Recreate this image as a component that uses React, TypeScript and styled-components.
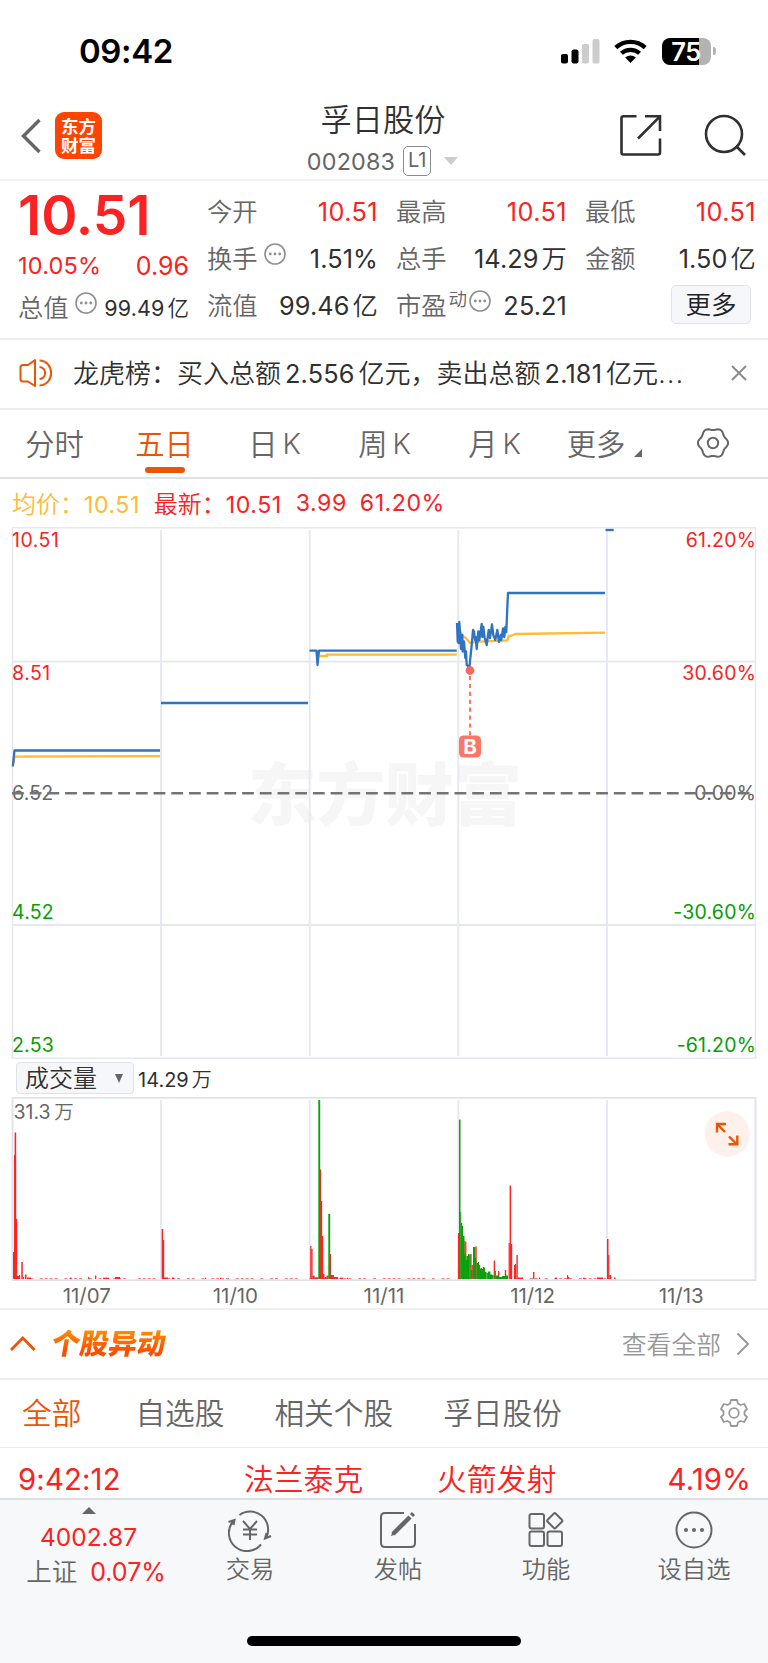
import React from "react";
import styled, { createGlobalStyle } from "styled-components";

const RED = "#fa2222";
const GREEN = "#04a004";
const ORANGE = "#ea5504";
const INK = "#303030";
const GREY = "#666";
const LINE = "#ececee";

const Global = createGlobalStyle`
  * { box-sizing: border-box; }
  body {
    margin: 0;
    background: #fff;
    font-family: Inter, "Noto Sans CJK SC", sans-serif;
    color: ${INK};
  }
`;

const Page = styled.div`
  width: 768px;
  height: 1663px;
  display: flex;
  flex-direction: column;
  background: #fff;
  overflow: hidden;
  white-space: nowrap;
  svg { display: block; flex: none; }
`;

const StatusBar = styled.div`
  height: 96px;
  padding: 6px 52px 0 79px;
  display: flex;
  align-items: center;
  justify-content: space-between;
`;
const Clock = styled.div`
  font-size: 33px;
  font-weight: 600;
  letter-spacing: -0.4px;
  color: #000;
`;
const StatusIcons = styled.div`
  display: flex;
  align-items: center;
`;
const Battery = styled.div`
  width: 49px;
  height: 27px;
  margin-left: 15px;
  border-radius: 8px;
  background: linear-gradient(90deg, #000 37px, #b3b3b3 37px);
  color: #fff;
  font-size: 25.5px;
  font-weight: 600;
  line-height: 27px;
  text-align: center;
  letter-spacing: -0.6px;
  padding-right: 1px;
`;
const BatteryTip = styled.div`
  width: 3px;
  height: 8px;
  margin-left: 2px;
  border-radius: 0 4px 4px 0;
  background: #b3b3b3;
`;

const Header = styled.header`
  height: 85px;
  border-bottom: 2px solid #f2f2f2;
  display: grid;
  grid-template-columns: 1fr 200px 1fr;
`;
const HeaderLeft = styled.div`
  display: flex;
  align-items: flex-start;
  padding: 16px 0 0 21px;
`;
const BrandLogo = styled.div`
  width: 47px;
  height: 47px;
  margin-left: 14px;
  border-radius: 9px;
  background: #ff4400;
  color: #fff;
  display: flex;
  flex-direction: column;
  align-items: center;
  justify-content: center;
  gap: 1.5px;
`;
const BrandLine = styled.span`
  font-family: "Noto Sans CJK SC", sans-serif;
  font-weight: 700;
  font-size: 17.5px;
  line-height: 18px;
`;
const HeaderTitle = styled.div`
  display: flex;
  flex-direction: column;
  align-items: center;
`;
const StockName = styled.div`
  margin-top: 6px;
  margin-right: 2px;
  height: 36px;
  line-height: 36px;
  font-size: 31.2px;
  font-weight: 350;
`;
const StockCode = styled.div`
  height: 30px;
  margin-top: 8px;
  margin-right: 3px;
  display: flex;
  align-items: center;
  font-size: 23.3px;
  color: ${GREY};
`;
const Digits = styled.span`
  letter-spacing: 0.2px;
`;
const LevelBadge = styled.span`
  width: 28px;
  height: 30px;
  margin: 0 13px 0 8px;
  border: 1.5px solid #8c8c8c;
  border-radius: 5px;
  font-size: 20px;
  line-height: 27px;
  text-align: center;
`;
const HeaderRight = styled.div`
  display: flex;
  justify-content: flex-end;
  padding: 18px 22px 0 0;
  gap: 42px;
`;

const Quote = styled.section`
  height: 159px;
  border-bottom: 2px solid ${LINE};
  padding: 0 13px 0 18px;
  display: grid;
  grid-template-columns: repeat(4, 1fr);
  column-gap: 19px;
`;
const PriceColumn = styled.div`
  display: flex;
  flex-direction: column;
`;
const LastPrice = styled.div`
  height: 68px;
  line-height: 69px;
  font-size: 55px;
  font-weight: 600;
  letter-spacing: -0.1px;
  color: ${RED};
`;
const ChangeRow = styled.div`
  height: 33px;
  display: flex;
  align-items: center;
  justify-content: space-between;
  color: ${RED};
  font-size: 23.5px;
  letter-spacing: 0.2px;
`;
const ChangeAmount = styled.span`
  font-size: 25px;
  letter-spacing: 0;
  padding-top: 1px;
  margin-right: -1px;
`;
const StatColumn = styled.div`
  padding-top: 7px;
`;
const Stat = styled.div<{ $tight?: boolean }>`
  height: 47.4px;
  display: flex;
  align-items: center;
  line-height: 40px;
  margin-top: ${(p) => (p.$tight ? "2.5px" : "0")};
`;
const StatLabel = styled.span`
  font-size: 25.3px;
  font-weight: 350;
  color: ${GREY};
`;
const StatHint = styled.span`
  margin: -10px 0 0 6px;
`;
const StatSup = styled.sup`
  font-size: 18.5px;
  font-weight: 350;
  line-height: 20px;
  color: ${GREY};
  margin: -15px -4px 0 2px;
`;
const StatValue = styled.span<{ $up?: boolean; $small?: boolean }>`
  margin-left: auto;
  margin-right: -1px;
  font-size: ${(p) => (p.$small ? "21.5px" : "25.3px")};
  letter-spacing: ${(p) => (p.$up ? "0.4px" : "0.1px")};
  color: ${(p) => (p.$up ? RED : INK)};
`;
const Unit = styled.span`
  margin-left: 3px;
  font-weight: 350;
`;
const MoreButton = styled.button`
  width: 80px;
  height: 39px;
  margin: -3px 4px 0 auto;
  padding: 0;
  border: 1.5px solid #dfe2e9;
  border-radius: 5px;
  background: #f6f7fa;
  font: 350 25.5px/34px Inter, "Noto Sans CJK SC", sans-serif;
  color: #222;
`;

const Notice = styled.section`
  height: 70px;
  border-bottom: 2px solid ${LINE};
  padding: 0 21px 2px 19px;
  display: flex;
  align-items: center;
`;
const NoticeText = styled.div`
  flex: 1;
  margin: -3px 0 0 20px;
  font-size: 26px;
  font-weight: 350;
`;
const Num = styled.span`
  margin: 0 4px;
  font-size: 25.3px;
  letter-spacing: 0.15px;
  font-weight: 400;
`;
const Dots = styled.span`
  letter-spacing: 1.5px;
`;

const PeriodTabs = styled.nav`
  height: 69px;
  border-bottom: 2px solid #dfe1e6;
  display: grid;
  grid-template-columns: repeat(6, 110px) 107px;
`;
const PeriodTab = styled.div<{ $active?: boolean }>`
  display: flex;
  align-items: center;
  justify-content: center;
  position: relative;
  padding-bottom: 3px;
  padding-right: 1px;
  font-size: 29.3px;
  font-weight: 350;
  color: ${(p) => (p.$active ? ORANGE : GREY)};
  &::after {
    content: "";
    display: ${(p) => (p.$active ? "block" : "none")};
    position: absolute;
    left: 35px;
    bottom: 4px;
    width: 40px;
    height: 6px;
    border-radius: 3px;
    background: ${ORANGE};
  }
`;
const Latin = styled.span`
  margin-left: 5px;
  margin-top: 3px;
  font-size: 28.5px;
`;
const CornerMark = styled.span`
  margin: 21px 0 0 9px;
  border-left: 8px solid transparent;
  border-bottom: 8px solid ${GREY};
`;

const Legend = styled.div`
  height: 48px;
  padding: 0 12px 2px;
  display: flex;
  align-items: center;
  font-size: 24px;
  font-weight: 350;
  color: ${RED};
`;
const LegendItem = styled.span<{ $color: string; $gap: number }>`
  color: ${(p) => p.$color};
  margin-right: ${(p) => p.$gap}px;
`;
const LegendNum = styled.span`
  font-size: 23.2px;
  letter-spacing: 0.5px;
  font-weight: 400;
`;

const VolumeHeader = styled.div`
  height: 38px;
  padding-left: 16px;
  display: flex;
  align-items: center;
`;
const IndicatorSelect = styled.div`
  width: 118px;
  height: 32px;
  padding: 0 10px 0 8px;
  display: flex;
  align-items: center;
  justify-content: space-between;
  border: 1.5px solid #dfe2e9;
  border-radius: 4px;
  background: #f6f7fa;
  font-size: 24px;
  font-weight: 350;
  line-height: 29px;
`;
const DownMark = styled.span`
  border: 4.5px solid transparent;
  border-top: 9px solid ${GREY};
  border-bottom: 0;
`;
const IndicatorValue = styled.div`
  margin-left: 4px;
  font-size: 20px;
`;

const Dates = styled.div`
  height: 29px;
  border-bottom: 2px solid #f0f0f2;
  padding: 1px 12.5px 0;
  display: grid;
  grid-template-columns: repeat(5, 1fr);
  text-align: center;
  font-size: 20.5px;
  line-height: 27px;
  color: ${GREY};
`;

const MoversHeader = styled.section`
  height: 70px;
  border-bottom: 2px solid ${LINE};
  padding: 0 18px 0 10px;
  display: flex;
  align-items: center;
`;
const MoversTitle = styled.h2`
  margin: -4px auto 0 16px;
  font-size: 28.5px;
  font-weight: 900;
  line-height: 36px;
  font-family: "Noto Sans CJK SC", sans-serif;
  transform: skewX(-10deg);
  background: linear-gradient(#ff8a00 20%, #ff4d00 75%);
  background-clip: text;
  color: transparent;
`;
const ViewAll = styled.span`
  margin: -2px 15px 0 0;
  font-size: 24.8px;
  font-weight: 350;
  color: #999;
`;

const MoversTabs = styled.nav`
  height: 68px;
  border-bottom: 1px solid ${LINE};
  padding: 0 20px 5px 22px;
  display: flex;
  align-items: center;
  gap: 50px;
`;
const MoversTab = styled.span<{ $active?: boolean }>`
  font-size: 29.7px;
  font-weight: 350;
  margin-right: ${(p) => (p.$active ? "4px" : "0")};
  color: ${(p) => (p.$active ? ORANGE : GREY)};
`;
const TabTool = styled.span`
  margin: 3px 0 0 auto;
`;

const MoverRow = styled.div`
  height: 50px;
  padding: 12px 17px 0 18px;
  display: grid;
  grid-template-columns: 226px 193px 1fr auto;
  line-height: 39px;
  font-size: 29.8px;
  font-weight: 350;
  color: ${RED};
`;
const MoverNum = styled.span`
  font-size: 29.3px;
  letter-spacing: 0.15px;
  font-weight: 400;
`;

const BottomBar = styled.footer`
  flex: 1;
  border-top: 2px solid #dcdee2;
  background: #f7f8fa;
  display: flex;
  flex-direction: column;
  align-items: center;
`;
const BottomItems = styled.div`
  width: 100%;
  height: 138px;
  display: grid;
  grid-template-columns: 176px repeat(4, 148px);
`;
const IndexTicker = styled.div`
  display: flex;
  flex-direction: column;
  align-items: center;
  padding: 7px 0 0 1px;
`;
const UpMark = styled.span`
  border: 7px solid transparent;
  border-bottom: 7px solid ${GREY};
  border-top: 0;
`;
const IndexValue = styled.div`
  margin-top: 6px;
  height: 34px;
  line-height: 34px;
  font-size: 24.5px;
  color: ${RED};
`;
const IndexChange = styled.div`
  height: 36px;
  padding-left: 15px;
  line-height: 36px;
  font-size: 25.5px;
  font-weight: 350;
  color: ${GREY};
`;
const IndexPct = styled.span`
  margin-left: 13px;
  font-size: 25px;
  font-weight: 400;
  color: ${RED};
`;
const Action = styled.div`
  display: flex;
  flex-direction: column;
  align-items: center;
  padding-top: 8px;
  font-size: 24.3px;
  font-weight: 350;
  line-height: 34px;
  color: ${GREY};
`;
const ActionLabel = styled.span``;
const HomeIndicator = styled.div`
  width: 274px;
  height: 10px;
  margin-top: -2px;
  border-radius: 5px;
  background: #000;
`;

const HintIcon = () => (
  <svg width="22" height="22" viewBox="0 0 22 22" fill="none">
    <circle cx="11" cy="11" r="10" stroke="#909090" strokeWidth="1.6" />
    <g fill="#909090">
      <circle cx="6.3" cy="11" r="1.4" />
      <circle cx="11" cy="11" r="1.4" />
      <circle cx="15.7" cy="11" r="1.4" />
    </g>
  </svg>
);

/* Six-lobed wavy outline around (17, 16). */
const WAVY_GEAR =
  "M" +
  Array.from({ length: 72 }, (_, i) => {
    const a = (i * Math.PI) / 36;
    const r = 14 + 1.1 * Math.cos(6 * a);
    return `${(17 + r * Math.cos(a)).toFixed(2)} ${(16 + r * Math.sin(a)).toFixed(2)}`;
  }).join("L") +
  "Z";

const VERTICALS = [161, 309.7, 458.3, 607];

const DAY4_PRICE =
  "457,623 457.7,641.5 458.7,643 459.3,622 461,649 462.3,635 462.7,651.5 464,641.5 465.3,658 466,651.5 466.7,665 468,666 469,672 470,661.5 471.7,645 473,630 474,631.5 475,640 475.7,637 476.7,649 478.3,631.5 479.3,640 481.7,624 482.3,637 483.3,627 484.7,638 486.7,645 488.7,630 490,638 492,624.5 493.3,635 495.3,640 497.3,630 499,642 500.7,635 501.3,640 503,628.5 504.3,637 505.3,627 506.3,632 507.3,608 508,593 605,593";

const PriceChart = () => (
  <svg width="768" height="532" viewBox="0 527 768 532" fill="none">
    <g
      fill="#f6f6f6"
      fontFamily="Noto Sans CJK SC, sans-serif"
      fontWeight="900"
      fontSize="68.5"
    >
      <text x="248" y="819.5">东方财富</text>
    </g>
    <g stroke="#e4e7ee" strokeWidth="1.5">
      <rect x="12.5" y="527.8" width="743" height="530.5" />
      {VERTICALS.map((x) => (
        <path key={x} d={`M${x} 530V1056`} strokeWidth="1.8" />
      ))}
      <path d="M12 661.7H755M12 925H755" strokeWidth="1.8" />
    </g>
    <g stroke="#fdbb36" strokeWidth="2.3">
      <path d="M13 765L14.5 756.7L160 756.2" />
      <path d="M319.6 656H327V654.7H456.7" />
      <path d="M457 623L461.7 635L466 638.3L470 642.7L480 641.7L507.3 640.3L508.7 636L511.7 635.7L515.7 634L605 632.7" />
    </g>
    <g stroke="#2f74c0" strokeWidth="2.3" strokeLinejoin="round">
      <path d="M12.8 766.5L14.5 750.5H160" />
      <path d="M161 703H308" />
      <path d="M309.5 650.7H316.5L317.5 665L319 650.7H456.7" />
      <polyline points={DAY4_PRICE} />
      <path d="M605.5 530H613.7" />
    </g>
    <circle cx="470" cy="670.5" r="4.4" fill="#f8685c" />
    <path d="M470 676V736" stroke="#fd7567" strokeWidth="2" strokeDasharray="4.2 3.7" />
    <rect x="459" y="735.5" width="22" height="22" rx="4.5" fill="#fd7567" />
    <text x="470" y="754" fill="#fff" fontSize="20.5" fontWeight="700" textAnchor="middle">B</text>
    <g fontSize="19.5" letterSpacing="0.2">
      <text x="12" y="547" fill={RED} letterSpacing="0.5">10.51</text>
      <text x="12" y="679.5" fill={RED} letterSpacing="0.5">8.51</text>
      <text x="12" y="800" fill={GREY}>6.52</text>
      <text x="12" y="919" fill={GREEN}>4.52</text>
      <text x="12" y="1051.5" fill={GREEN}>2.53</text>
    </g>
    <g fontSize="19.5" textAnchor="end" letterSpacing="0.2">
      <text x="756" y="547" fill={RED}>61.20%</text>
      <text x="756" y="679.5" fill={RED}>30.60%</text>
      <text x="756" y="800" fill={GREY}>0.00%</text>
      <text x="756" y="919" fill={GREEN}>-30.60%</text>
      <text x="756" y="1051.5" fill={GREEN}>-61.20%</text>
    </g>
    <path d="M12 793.2H755" stroke="#747474" strokeWidth="2.6" strokeDasharray="11.8 5.9" />
  </svg>
);

type Bar = [x: number, top: number, width?: number];

const RED_BARS: Bar[] = [
  [13, 1252, 1.2], [14, 1155, 1.2], [14.6, 1132.5, 1.6], [15.8, 1219, 1.4], [17, 1276, 2], [19, 1275], [21.3, 1262, 1.5],
  [23, 1277], [25, 1274.5, 1.5], [27, 1277.5, 4], [70, 1277.5], [88, 1277], [95, 1275.5, 1.3], [103, 1277.7, 6], [115, 1277, 5],
  [161.7, 1229, 1.4], [163, 1240, 1.2], [164, 1277.5, 4], [172, 1277.5, 2], [205, 1277.8], [220, 1277.8],
  [310.2, 1246, 1.3], [311.3, 1249, 1.3], [312.6, 1275.5, 2], [314.5, 1277.3, 4], [320, 1169.5, 1.2], [321, 1201, 1.2],
  [322, 1236, 1.2], [323, 1274, 1.5], [324.5, 1277, 2], [326.5, 1275.5, 2], [329.8, 1254, 1.3], [331, 1275, 3],
  [334, 1277, 4], [340, 1277.7, 3], [347, 1277.8],
  [458, 1233, 1.4], [461, 1223, 1.2], [464.3, 1241], [465.2, 1242, 1.2], [470.3, 1254, 1.3], [471.6, 1265, 1.3],
  [475.3, 1246.5, 1.4], [479, 1265], [483, 1267], [493.7, 1260.5, 1.4], [498, 1271, 1.3], [504.8, 1270, 1.4],
  [508.6, 1243, 1.2], [509.6, 1185.5, 1.5], [511, 1244, 1.2], [514, 1265], [515, 1264, 1.2], [516.4, 1255, 1.4],
  [518, 1277.5, 5], [533, 1272, 1.4], [539, 1277.5], [555, 1277.5, 2], [567, 1275], [568, 1277, 1.2], [583, 1277.8, 2],
  [597, 1277.5, 6], [607, 1239, 1.5], [608.2, 1255, 1.2], [609.3, 1275, 2], [614, 1277.5, 1.5],
];

const GREEN_BARS: Bar[] = [
  [318.3, 1100, 1.9], [328.3, 1214, 1.9],
  [459, 1119.5, 1.5], [460.2, 1212, 1], [461.5, 1226, 1.6], [463, 1236, 1.5], [464, 1254, 1.5], [465.5, 1260, 1.5],
  [466.5, 1256, 1.7], [468, 1254, 1.6], [469.3, 1255, 1.4], [471, 1270, 1.4], [473, 1247, 2.2], [475, 1258, 1.2],
  [476.5, 1263, 1.5], [477.8, 1262, 1.2], [479.5, 1269, 1.5], [480.6, 1268, 1.4], [482, 1269, 1.5], [483.4, 1267.5, 1.7],
  [485, 1272, 1.5], [486.5, 1273, 1.4], [488, 1271.5, 2.4], [490, 1274.5, 2.2], [492, 1275, 1.5], [494.5, 1271, 1.4],
  [496, 1275.5, 3], [499, 1277, 3], [502, 1276, 3], [505, 1275.5, 3],
];

const SPARKS = Array.from({ length: 118 }, (_, i) => 30 + i * 4.9).filter(
  (x, i) => (i * 7) % 5 !== 2 && (i * 11) % 7 !== 3 && (x < 455 || x > 512)
);

const VolumeChart = () => (
  <svg width="768" height="184" viewBox="0 1097 768 184" fill="none">
    <g stroke="#e4e7ee" strokeWidth="1.8">
      <rect x="12.5" y="1097.8" width="743" height="182.4" stroke="#dfe2e8" />
      {VERTICALS.map((x) => (
        <path key={x} d={`M${x} 1100V1279`} />
      ))}
    </g>
    <g fill="#ff2424">
      {SPARKS.map((x) => (
        <rect key={x} x={x} y="1278.4" width="3" height="0.6" />
      ))}
      {RED_BARS.map(([x, top, w = 1.2]) => (
        <rect key={`${x}-${top}`} x={x} y={top} width={w} height={1279 - top} />
      ))}
    </g>
    <g fill="#0ca00c">
      {GREEN_BARS.map(([x, top, w = 1.2]) => (
        <rect key={`${x}-${top}`} x={x} y={top} width={w} height={1279 - top} />
      ))}
    </g>
    <text x="13.5" y="1119" fontSize="19.5" fill={GREY}>
      31.3<tspan dx="3.5" fontWeight="350">万</tspan>
    </text>
    <circle cx="727.3" cy="1134" r="22.7" fill="#fef1eb" />
    <path
      d="M717 1132.5V1124H726M717.5 1124.5L725 1132M729 1136.5L736.5 1144M728.5 1144.3H737.3V1135.5"
      stroke={ORANGE}
      strokeWidth="2.4"
    />
  </svg>
);

const App = () => (
  <Page>
    <Global />
    <StatusBar>
      <Clock>09:42</Clock>
      <StatusIcons>
        <svg width="39" height="25" viewBox="0 0 39 25">
          <rect x="0" y="15" width="7" height="9.5" rx="2" />
          <rect x="10.5" y="10.5" width="7" height="14" rx="2" />
          <rect x="21" y="5" width="7" height="19.5" rx="2" fill="#ccc" />
          <rect x="31.5" y="0" width="7" height="24.5" rx="2" fill="#ccc" />
        </svg>
        <svg width="47" height="25" viewBox="-14 0 47 25" fill="none">
          <path d="M1.8 8.6C10 0.9 23 0.9 31.2 8.6" stroke="#000" strokeWidth="4.4" />
          <path d="M7.4 14.3C12.6 9.6 20.4 9.6 25.6 14.3" stroke="#000" strokeWidth="4.2" />
          <path d="M11.2 18.4C14.2 15.7 18.8 15.7 21.8 18.4L16.5 24Z" fill="#000" />
        </svg>
        <Battery>75</Battery>
        <BatteryTip />
      </StatusIcons>
    </StatusBar>

    <Header>
      <HeaderLeft>
        <svg width="20" height="47" viewBox="0 0 20 47" fill="none">
          <path d="M18.5 8L2.5 24L18.5 40" stroke={GREY} strokeWidth="3.4" />
        </svg>
        <BrandLogo>
          <BrandLine>东方</BrandLine>
          <BrandLine>财富</BrandLine>
        </BrandLogo>
      </HeaderLeft>
      <HeaderTitle>
        <StockName>孚日股份</StockName>
        <StockCode>
          <Digits>002083</Digits>
          <LevelBadge>L1</LevelBadge>
          <svg width="14" height="8" viewBox="0 0 14 8">
            <path d="M0 0H14L7 8Z" fill="#ccc" />
          </svg>
        </StockCode>
      </HeaderTitle>
      <HeaderRight>
        <svg width="42" height="42" viewBox="0 0 42 42" fill="none" stroke="#303030" strokeWidth="2.6">
          <path d="M16.5 2.3H3.5Q1.5 2.3 1.5 4.3V38.5Q1.5 40.5 3.5 40.5H38Q40 40.5 40 38.5V24.5" />
          <path d="M25 2.3H40V17M39.5 2.8L18 24.5" />
        </svg>
        <svg width="42" height="42" viewBox="0 0 42 42" fill="none" stroke="#303030" strokeWidth="2.6">
          <circle cx="20" cy="20" r="18" />
          <path d="M32 32L41 41" />
        </svg>
      </HeaderRight>
    </Header>

    <Quote>
      <PriceColumn>
        <LastPrice>10.51</LastPrice>
        <ChangeRow>
          <span>10.05%</span>
          <ChangeAmount>0.96</ChangeAmount>
        </ChangeRow>
        <Stat $tight>
          <StatLabel>总值</StatLabel>
          <StatHint><HintIcon /></StatHint>
          <StatValue $small>99.49<Unit>亿</Unit></StatValue>
        </Stat>
      </PriceColumn>
      <StatColumn>
        <Stat>
          <StatLabel>今开</StatLabel>
          <StatValue $up>10.51</StatValue>
        </Stat>
        <Stat>
          <StatLabel>换手</StatLabel>
          <StatHint><HintIcon /></StatHint>
          <StatValue>1.51%</StatValue>
        </Stat>
        <Stat>
          <StatLabel>流值</StatLabel>
          <StatValue>99.46<Unit>亿</Unit></StatValue>
        </Stat>
      </StatColumn>
      <StatColumn>
        <Stat>
          <StatLabel>最高</StatLabel>
          <StatValue $up>10.51</StatValue>
        </Stat>
        <Stat>
          <StatLabel>总手</StatLabel>
          <StatValue>14.29<Unit>万</Unit></StatValue>
        </Stat>
        <Stat>
          <StatLabel>市盈</StatLabel>
          <StatSup>动</StatSup>
          <StatHint><HintIcon /></StatHint>
          <StatValue>25.21</StatValue>
        </Stat>
      </StatColumn>
      <StatColumn>
        <Stat>
          <StatLabel>最低</StatLabel>
          <StatValue $up>10.51</StatValue>
        </Stat>
        <Stat>
          <StatLabel>金额</StatLabel>
          <StatValue>1.50<Unit>亿</Unit></StatValue>
        </Stat>
        <Stat>
          <MoreButton>更多</MoreButton>
        </Stat>
      </StatColumn>
    </Quote>

    <Notice>
      <svg width="34" height="30" viewBox="0 0 34 30" fill="none" stroke={ORANGE} strokeWidth="2">
        <path d="M16 2V28L9 23.5H4Q1.5 23.5 1.5 21V9.5Q1.5 7 4 7H9Z" strokeLinejoin="round" />
        <path d="M20.5 2.5C36 3 36 27 20.5 27.5M20.5 9C28 9.5 28 20.5 20.5 21" />
      </svg>
      <NoticeText>
        龙虎榜：买入总额<Num>2.556</Num>亿元，卖出总额<Num>2.181</Num>亿元<Dots>...</Dots>
      </NoticeText>
      <svg width="16" height="16" viewBox="0 0 16 16" stroke="#8c8c8c" strokeWidth="2">
        <path d="M1 1L15 15M15 1L1 15" />
      </svg>
    </Notice>

    <PeriodTabs>
      <PeriodTab>分时</PeriodTab>
      <PeriodTab $active>五日</PeriodTab>
      <PeriodTab>日<Latin>K</Latin></PeriodTab>
      <PeriodTab>周<Latin>K</Latin></PeriodTab>
      <PeriodTab>月<Latin>K</Latin></PeriodTab>
      <PeriodTab>更多<CornerMark /></PeriodTab>
      <PeriodTab>
        <svg width="34" height="32" viewBox="0 -1 34 32" fill="none" stroke={GREY} strokeWidth="2">
          <circle cx="17" cy="16" r="5.2" />
          <path strokeLinejoin="round" d={WAVY_GEAR} />
        </svg>
      </PeriodTab>
    </PeriodTabs>

    <Legend>
      <LegendItem $color="#fdbb36" $gap={14}>均价：<LegendNum>10.51</LegendNum></LegendItem>
      <LegendItem $color={RED} $gap={14}>最新：<LegendNum>10.51</LegendNum></LegendItem>
      <LegendItem $color={RED} $gap={13}><LegendNum>3.99</LegendNum></LegendItem>
      <LegendItem $color={RED} $gap={0}><LegendNum>61.20%</LegendNum></LegendItem>
    </Legend>
    <PriceChart />

    <VolumeHeader>
      <IndicatorSelect>
        成交量
        <DownMark />
      </IndicatorSelect>
      <IndicatorValue>14.29<Unit>万</Unit></IndicatorValue>
    </VolumeHeader>
    <VolumeChart />
    <Dates>
      {["11/07", "11/10", "11/11", "11/12", "11/13"].map((d) => (
        <span key={d}>{d}</span>
      ))}
    </Dates>

    <MoversHeader>
      <svg width="26" height="16" viewBox="0 0 26 16" fill="none">
        <path d="M1 14L12.8 2L24.6 14" stroke={ORANGE} strokeWidth="2.8" />
      </svg>
      <MoversTitle>个股异动</MoversTitle>
      <ViewAll>查看全部</ViewAll>
      <svg width="14" height="24" viewBox="0 0 14 24" fill="none">
        <path d="M1.5 1.5L12 12L1.5 22.5" stroke="#999" strokeWidth="2" />
      </svg>
    </MoversHeader>
    <MoversTabs>
      <MoversTab $active>全部</MoversTab>
      <MoversTab>自选股</MoversTab>
      <MoversTab>相关个股</MoversTab>
      <MoversTab>孚日股份</MoversTab>
      <TabTool>
        <svg width="28" height="28" viewBox="0 0 28 28" fill="none" stroke="#999" strokeWidth="1.8">
          <circle cx="14" cy="14" r="4.8" />
          <path
            strokeLinejoin="round"
            d="M11 1H17L18 4.5L20.5 6L24.2 5L27 10L24.5 12.5V15.5L27 18L24.2 23L20.5 22L18 23.5L17 27H11L10 23.5L7.5 22L3.8 23L1 18L3.5 15.5V12.5L1 10L3.8 5L7.5 6L10 4.5Z"
          />
        </svg>
      </TabTool>
    </MoversTabs>
    <MoverRow>
      <MoverNum>9:42:12</MoverNum>
      <span>法兰泰克</span>
      <span>火箭发射</span>
      <MoverNum>4.19%</MoverNum>
    </MoverRow>

    <BottomBar>
      <BottomItems>
        <IndexTicker>
          <UpMark />
          <IndexValue>4002.87</IndexValue>
          <IndexChange>上证<IndexPct>0.07%</IndexPct></IndexChange>
        </IndexTicker>
        <Action>
          <svg width="44" height="44" viewBox="0 0 44 44" fill="none" stroke={GREY} strokeWidth="2">
            <path d="M11.5 7A18 18 0 0 1 38.5 29M33 36.5A18 18 0 0 1 5 13.5M0.5 14L6.5 12L5.5 17M43 28L37 30.5L38.5 25" />
            <path d="M15 13L22 21L29 13M22 21V32M15 21.5H29M15 26.5H29" />
          </svg>
          <ActionLabel>交易</ActionLabel>
        </Action>
        <Action>
          <svg width="44" height="44" viewBox="0 0 44 44" fill="none" stroke={GREY} strokeWidth="2">
            <path d="M28 5H9Q5 5 5 9V35Q5 39 9 39H35Q39 39 39 35V16" />
            <path d="M17 26L34 9" strokeWidth="4.5" />
            <path d="M15 28L16.5 23.5L19.5 26.5Z" fill={GREY} stroke="none" />
            <path d="M35.5 7.5L37.5 5.5" strokeWidth="4.5" />
          </svg>
          <ActionLabel>发帖</ActionLabel>
        </Action>
        <Action>
          <svg width="44" height="44" viewBox="0 0 44 44" fill="none" stroke={GREY} strokeWidth="2">
            <rect x="5.5" y="6" width="14.5" height="14.5" rx="2" />
            <rect x="5.5" y="23.5" width="14.5" height="14.5" rx="2" />
            <rect x="23.5" y="23.5" width="14.5" height="14.5" rx="2" />
            <rect x="25" y="7" width="11.5" height="11.5" rx="1.5" transform="rotate(45 30.75 12.75)" />
          </svg>
          <ActionLabel>功能</ActionLabel>
        </Action>
        <Action>
          <svg width="44" height="44" viewBox="0 0 44 44" fill="none" stroke={GREY} strokeWidth="2">
            <circle cx="22" cy="22" r="17.5" />
            <g fill={GREY} stroke="none">
              <circle cx="14" cy="22" r="2" />
              <circle cx="22" cy="22" r="2" />
              <circle cx="30" cy="22" r="2" />
            </g>
          </svg>
          <ActionLabel>设自选</ActionLabel>
        </Action>
      </BottomItems>
      <HomeIndicator />
    </BottomBar>
  </Page>
);

export default App;
